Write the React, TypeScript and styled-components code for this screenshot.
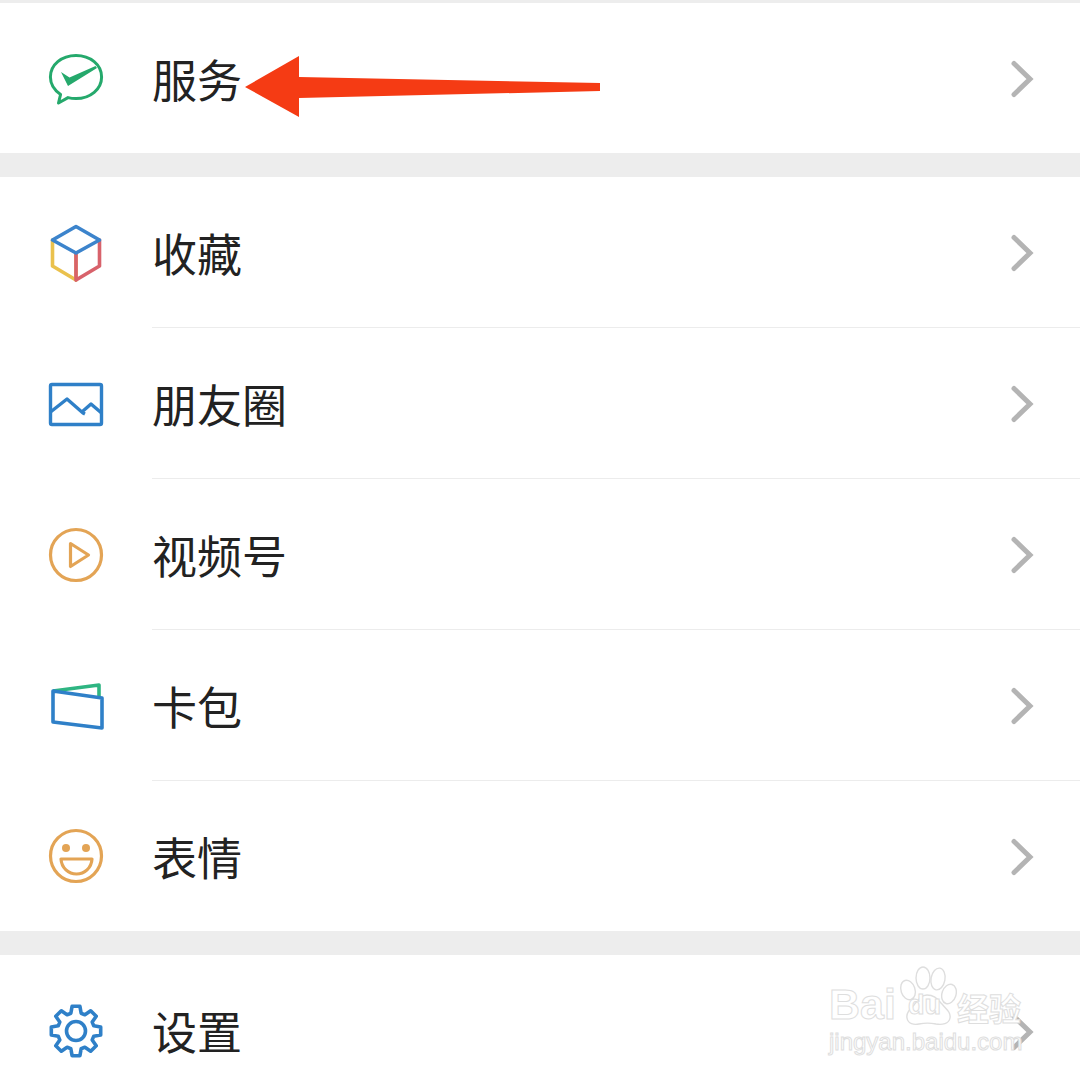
import React from 'react';
import styled, { createGlobalStyle } from 'styled-components';

const GlobalStyle = createGlobalStyle`
  html, body {
    margin: 0;
    padding: 0;
    background: #ededed;
  }
  * {
    box-sizing: border-box;
  }
`;

const Page = styled.div`
  position: relative;
  width: 1080px;
  height: 1080px;
  padding-top: 3px;
  overflow: hidden;
  background: #ededed;
  font-family: 'Noto Sans CJK SC', 'Liberation Sans', sans-serif;
`;
const Group = styled.section`
  background: #fff;
  margin-bottom: 24px;
`;
const Row = styled.div`
  display: flex;
  align-items: stretch;
  padding-left: 46px;
  gap: 46px;
`;
const IconBox = styled.div`
  flex: none;
  width: 60px;
  display: flex;
  align-items: center;
  justify-content: center;
  svg {
    display: block;
    width: 60px;
    height: 60px;
    overflow: visible;
  }
`;
const Content = styled.div<{ $divider: boolean; $height: number }>`
  flex: 1;
  height: ${(props) => props.$height}px;
  display: flex;
  align-items: center;
  justify-content: space-between;
  padding-right: 46px;
  border-bottom: ${(props) => (props.$divider ? '1px solid #ececec' : 'none')};
`;
const Label = styled.span`
  font-size: 45px;
  line-height: 1;
  font-weight: 400;
  color: #222;
`;
const Chevron = styled.svg`
  display: block;
  width: 24px;
  height: 38px;
  margin-top: 2px;
  fill: none;
  stroke: #b4b4b4;
  stroke-width: 5;
  stroke-linecap: round;
  stroke-linejoin: miter;
`;
const Arrow = styled.svg`
  position: absolute;
  left: 240px;
  top: 50px;
  width: 365px;
  height: 72px;
`;
const Watermark = styled.div`
  position: absolute;
  left: 829px;
  top: 962px;
  width: 204px;
  height: 100px;
  color: #fff;
  -webkit-text-stroke: 1px #dedede;
  pointer-events: none;
`;
const WatermarkBrand = styled.div`
  display: flex;
  align-items: flex-end;
  height: 64px;
`;
const WatermarkLatin = styled.span`
  font-family: 'Liberation Sans', sans-serif;
  font-size: 43px;
  font-weight: 700;
  line-height: 1;
`;
const Paw = styled.div`
  position: relative;
  flex: none;
  width: 60px;
  height: 60px;
  margin-left: 1px;
  svg {
    display: block;
    width: 60px;
    height: 60px;
    fill: #fff;
    stroke: #dedede;
    stroke-width: 1.4;
  }
`;
const PawText = styled.span`
  position: absolute;
  left: 11px;
  bottom: 7px;
  font-family: 'Liberation Sans', sans-serif;
  font-size: 27px;
  font-weight: 700;
  line-height: 1;
`;
const WatermarkCjk = styled.span`
  font-size: 32px;
  font-weight: 700;
  line-height: 1;
  margin-bottom: 3px;
`;
const WatermarkUrl = styled.div`
  font-family: 'Liberation Sans', sans-serif;
  font-size: 24px;
  line-height: 1;
  margin-top: 4px;
  white-space: nowrap;
`;

const BLUE = '#2f80c8';
const ORANGE = '#e3a455';

function gearPath() {
  const teeth = 8;
  const points: string[] = [];
  for (let i = 0; i < teeth; i++) {
    const a = (i * Math.PI * 2) / teeth - Math.PI / 2;
    const step = (Math.PI * 2) / teeth;
    const corners: [number, number][] = [
      [18.5, -step * 0.36],
      [25, -step * 0.2],
      [25, step * 0.2],
      [18.5, step * 0.36],
    ];
    corners.forEach(([r, d]) => {
      const x = 30 + r * Math.cos(a + d);
      const y = 30 + r * Math.sin(a + d);
      points.push(`${x.toFixed(2)} ${y.toFixed(2)}`);
    });
  }
  return `M${points.join('L')}Z`;
}

const ChatIcon = () => (
  <svg viewBox="0 0 60 60" fill="none">
    <path
      d="M30 7.5C15.6 7.5 4.4 16.8 4.4 29c0 7.6 4.2 13.4 10.2 17.4L12.5 55l9.5-5.4c2.6.7 5.2 1 8 1 14.4 0 25.6-9.4 25.6-21.6S44.4 7.5 30 7.5z"
      stroke="#25a96c"
      strokeWidth="3"
      strokeLinejoin="round"
    />
    <path d="M15 24l8.5 5.5L49.5 18l1.5 2L22 38z" fill="#25a96c" />
  </svg>
);

const CubeIcon = () => (
  <svg viewBox="0 0 60 60" fill="none" strokeWidth="3.6" strokeLinecap="round" strokeLinejoin="round">
    <path d="M6.5 17v26L30 57V30" stroke="#eac14d" />
    <path d="M53.5 17v26L30 57V30" stroke="#d8626b" />
    <path d="M30 3.5L53.5 17 30 30 6.5 17z" stroke="#3c84cc" />
  </svg>
);

const PictureIcon = () => (
  <svg viewBox="0 0 60 60" fill="none" stroke={BLUE} strokeWidth="3.4" strokeLinejoin="round">
    <rect x="4.5" y="10.5" width="51" height="40" rx="1.5" />
    <path d="M4.5 38L21 25l16 14 2 1M37 37l8-7 10.5 9" />
  </svg>
);

const PlayIcon = () => (
  <svg viewBox="0 0 60 60" fill="none" stroke={ORANGE} strokeWidth="3.2" strokeLinejoin="round">
    <circle cx="30" cy="30" r="25.5" />
    <path d="M24.5 18.5L42.5 30 24.5 41.5z" />
  </svg>
);

const CardIcon = () => (
  <svg viewBox="0 0 60 60" fill="none" strokeWidth="3.6" strokeLinejoin="round">
    <path d="M7 15L53 9v13" stroke="#2eb582" />
    <path d="M7 15l49 7v30L7 46z" stroke={BLUE} />
  </svg>
);

const SmileIcon = () => (
  <svg viewBox="0 0 60 60" fill="none" stroke={ORANGE} strokeWidth="3.2" strokeLinejoin="round">
    <circle cx="30" cy="30" r="25.5" />
    <circle cx="20" cy="22" r="4" fill={ORANGE} stroke="none" />
    <circle cx="40" cy="22" r="4" fill={ORANGE} stroke="none" />
    <path d="M15 33H46C45.5 42 38.5 48 30.5 48S15.5 42 15 33z" />
  </svg>
);

const GearIcon = () => (
  <svg viewBox="0 0 60 60" fill="none" stroke={BLUE} strokeWidth="3.6" strokeLinejoin="round">
    <path d={gearPath()} />
    <circle cx="30" cy="30" r="9.5" />
  </svg>
);

const ChevronIcon = () => (
  <Chevron viewBox="0 0 24 38">
    <path d="M4 3.5L20 19 4 34.5" />
  </Chevron>
);

const ITEMS = [
  [{ label: '服务', icon: <ChatIcon />, height: 150 }],
  [
    { label: '收藏', icon: <CubeIcon />, height: 151 },
    { label: '朋友圈', icon: <PictureIcon />, height: 151 },
    { label: '视频号', icon: <PlayIcon />, height: 151 },
    { label: '卡包', icon: <CardIcon />, height: 151 },
    { label: '表情', icon: <SmileIcon />, height: 150 },
  ],
  [{ label: '设置', icon: <GearIcon />, height: 151 }],
];

export default function App() {
  return (
    <>
      <GlobalStyle />
      <Page>
        {ITEMS.map((group, groupIndex) => (
          <Group key={groupIndex}>
            {group.map((item, itemIndex) => (
              <Row key={item.label}>
                <IconBox>{item.icon}</IconBox>
                <Content $divider={itemIndex < group.length - 1} $height={item.height}>
                  <Label>{item.label}</Label>
                  <ChevronIcon />
                </Content>
              </Row>
            ))}
          </Group>
        ))}
        <Arrow viewBox="240 50 365 72">
          <path d="M245 87L299 56V77L600 83V91L299 98V117z" fill="#f53b14" />
        </Arrow>
        <Watermark>
          <WatermarkBrand>
            <WatermarkLatin>Bai</WatermarkLatin>
            <Paw>
              <svg viewBox="0 0 60 60">
                <ellipse cx="11" cy="24" rx="7" ry="10" transform="rotate(-18 11 24)" />
                <ellipse cx="26" cy="12" rx="7" ry="11" />
                <ellipse cx="41" cy="13" rx="7" ry="11" transform="rotate(10 41 13)" />
                <ellipse cx="52" cy="28" rx="7" ry="10" transform="rotate(18 52 28)" />
                <path d="M30 29c-6 0-9 5-13 10-4 4-8 8-7 13 1 6 7 7 12 6 5-1 12-1 17 0 6 1 13 0 14-6 1-6-4-9-8-14-4-4-7-9-15-9z" />
              </svg>
              <PawText>du</PawText>
            </Paw>
            <WatermarkCjk>经验</WatermarkCjk>
          </WatermarkBrand>
          <WatermarkUrl>jingyan.baidu.com</WatermarkUrl>
        </Watermark>
      </Page>
    </>
  );
}
